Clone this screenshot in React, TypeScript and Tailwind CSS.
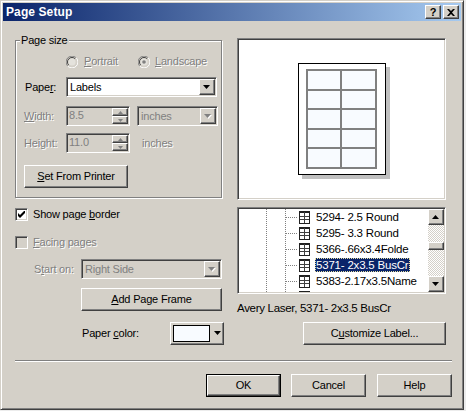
import React from "react";

const raised =
  "border border-t-white border-l-white border-r-[#404040] border-b-[#404040] shadow-[inset_-1px_-1px_#808080]";
const sunken =
  "border border-t-[#808080] border-l-[#808080] border-r-white border-b-white shadow-[inset_1px_1px_#404040,inset_-1px_-1px_#d4d0c8]";
const dis = "text-[#808080] [text-shadow:1px_1px_0_#fff]";

function DownArrow({ disabled }: { disabled?: boolean }) {
  return (
    <svg width="8" height="5" viewBox="0 0 8 5">
      {disabled && <polygon points="1,1 8,1 4.5,5" fill="#fff" />}
      <polygon points="0,0 7,0 3.5,4" fill={disabled ? "#808080" : "#000"} />
    </svg>
  );
}

function UpArrow({ disabled }: { disabled?: boolean }) {
  return (
    <svg width="8" height="5" viewBox="0 0 8 5">
      <polygon points="0,4 7,4 3.5,0" fill={disabled ? "#808080" : "#000"} />
    </svg>
  );
}

function DropBtn({ disabled }: { disabled?: boolean }) {
  return (
    <div className={`w-[16px] h-full bg-[#d4d0c8] flex items-center justify-center ${raised}`}>
      <DownArrow disabled={disabled} />
    </div>
  );
}

function Combo({
  text,
  width,
  disabled,
}: {
  text: string;
  width: string;
  disabled?: boolean;
}) {
  return (
    <div
      className={`${width} h-[20px] flex items-stretch ${sunken} ${
        disabled ? "bg-[#d4d0c8]" : "bg-white"
      } p-[1px]`}
    >
      <div
        className={`flex-1 pl-[2px] leading-[16px] ${
          disabled ? "text-[#808080]" : "text-black"
        }`}
      >
        {text}
      </div>
      <DropBtn disabled={disabled} />
    </div>
  );
}

function Spin({ text }: { text: string }) {
  return (
    <div className={`w-[64px] h-[20px] flex bg-[#d4d0c8] ${sunken} p-[1px]`}>
      <div className="flex-1 pl-[1px] leading-[14px] text-[#808080]">{text}</div>
      <div className="w-[16px] flex flex-col">
        <div className={`h-[8px] flex items-center justify-center ${raised}`}>
          <svg width="5" height="3" viewBox="0 0 5 3">
            <polygon points="0,3 5,3 2.5,0" fill="#808080" />
          </svg>
        </div>
        <div className={`h-[8px] flex items-center justify-center ${raised}`}>
          <svg width="5" height="3" viewBox="0 0 5 3">
            <polygon points="0,0 5,0 2.5,3" fill="#808080" />
          </svg>
        </div>
      </div>
    </div>
  );
}

function Radio({ checked }: { checked?: boolean }) {
  return (
    <svg width="12" height="12" viewBox="0 0 12 12">
      <path d="M10.2 1.8 A5.7 5.7 0 0 0 1.8 10.2" stroke="#808080" fill="none" />
      <path d="M1.8 10.2 A5.7 5.7 0 0 0 10.2 1.8" stroke="#fff" fill="none" />
      <path d="M9.2 2.8 A4.4 4.4 0 0 0 2.8 9.2" stroke="#404040" fill="none" />
      <path d="M2.8 9.2 A4.4 4.4 0 0 0 9.2 2.8" stroke="#d4d0c8" fill="none" />
      <circle cx="6" cy="6" r="3.6" fill="#e4e2dc" />
      {checked && <circle cx="6" cy="6" r="1.8" fill="#808080" />}
    </svg>
  );
}

function Check({ checked, disabled }: { checked?: boolean; disabled?: boolean }) {
  return (
    <div
      className={`w-[13px] h-[13px] ${sunken} ${
        disabled ? "bg-[#d4d0c8]" : "bg-white"
      } flex items-center justify-center`}
    >
      {checked && (
        <svg width="7" height="7" viewBox="0 0 7 7">
          <polygon points="0,2 2,4 6,0 7,0 7,2 2,7 0,5" fill="#000" />
        </svg>
      )}
    </div>
  );
}

function Btn({
  children,
  className,
}: {
  children: React.ReactNode;
  className: string;
}) {
  return (
    <div
      className={`${className} bg-[#d4d0c8] ${raised} flex items-center justify-center leading-[13px]`}
    >
      {children}
    </div>
  );
}

function PageIcon() {
  return (
    <svg width="11" height="13" viewBox="0 0 11 13">
      <rect x="0.5" y="0.5" width="10" height="12" fill="#fff" stroke="#202020" />
      <line x1="1" y1="1.5" x2="10" y2="1.5" stroke="#202020" />
      <line x1="5.5" y1="1" x2="5.5" y2="12" stroke="#404040" />
      <line x1="1" y1="5.5" x2="10" y2="5.5" stroke="#404040" />
      <line x1="1" y1="8.5" x2="10" y2="8.5" stroke="#404040" />
    </svg>
  );
}

const vdots =
  "w-px self-stretch bg-[repeating-linear-gradient(to_bottom,#808080_0_1px,transparent_1px_2px)]";
const hdots =
  "h-px bg-[repeating-linear-gradient(to_right,#808080_0_1px,transparent_1px_2px)]";

function TreeRow({ text, selected }: { text: string; selected?: boolean }) {
  return (
    <div className="h-[16px] flex items-center shrink-0">
      <div className="w-[27px]" />
      <div className={vdots} />
      <div className="w-[18px]" />
      <div className={vdots} />
      <div className={`w-[11px] ${hdots}`} />
      <div className="w-[2px]" />
      <PageIcon />
      <div className="w-[5px]" />
      <span
        className={`px-[1px] h-[14px] leading-[14px] whitespace-nowrap text-[11.5px] tracking-[-0.2px] ${
          selected
            ? "bg-[#0a246a] text-white outline-1 outline-dotted outline-[#e8e0a0] -outline-offset-1"
            : "text-black"
        }`}
      >
        {text}
      </span>
    </div>
  );
}

export default function App() {
  return (
    <div className="w-[466px] h-[411px] bg-[#ececec]">
      <div className="w-[464px] h-[410px] bg-[#d4d0c8] border border-t-[#d4d0c8] border-l-[#d4d0c8] border-r-[#404040] border-b-[#404040] shadow-[inset_1px_1px_#fff,inset_-1px_-1px_#808080] p-[2px] flex flex-col font-['Liberation_Sans',Arial,sans-serif] text-[11px] tracking-[-0.2px] text-black">
        {/* Title bar */}
        <div className="h-[18px] shrink-0 bg-[linear-gradient(to_right,#0a246a,#a6caf0)] flex items-center pl-[3px] pr-[2px]">
          <span className="flex-1 text-white font-bold text-[12px] tracking-[0.1px]">Page Setup</span>
          <div className={`w-[16px] h-[14px] bg-[#d4d0c8] ${raised} flex items-center justify-center font-bold text-[11px] leading-[11px]`}>
            ?
          </div>
          <div className={`ml-[2px] w-[16px] h-[14px] bg-[#d4d0c8] ${raised} flex items-center justify-center`}>
            <svg width="8" height="7" viewBox="0 0 8 7">
              <path d="M0 0 L2 0 L4 2 L6 0 L8 0 L5 3.5 L8 7 L6 7 L4 5 L2 7 L0 7 L3 3.5 Z" fill="#000" />
            </svg>
          </div>
        </div>

        {/* Body */}
        <div className="flex items-start">
          {/* Left column */}
          <div className="ml-[12px] w-[210px] flex flex-col">
            <div className="mt-[19px] relative w-[207px] h-[158px] border border-[#808080] shadow-[inset_1px_1px_#fff,1px_1px_#fff] flex flex-col">
              <span className="absolute -top-[7px] left-[4px] bg-[#d4d0c8] px-[1px] leading-[13px]">
                Page size
              </span>
              <div className="mt-[14px] h-[13px] flex items-center pl-[50px]">
                <div className="w-[72px] flex items-center">
                  <Radio />
                  <span className={`ml-[6px] ${dis}`}>
                    <u>P</u>ortrait
                  </span>
                </div>
                <div className="flex items-center">
                  <Radio checked />
                  <span className={`ml-[5px] ${dis}`}>
                    <u>L</u>andscape
                  </span>
                </div>
              </div>
              <div className="mt-[9px] h-[20px] flex items-center pl-[9px]">
                <span className="w-[41px]">
                  Pape<u>r</u>:
                </span>
                <Combo text="Labels" width="w-[151px]" />
              </div>
              <div className="mt-[9px] h-[20px] flex items-center pl-[8px]">
                <span className={`w-[42px] ${dis}`}>
                  <u>W</u>idth:
                </span>
                <Spin text="8.5" />
                <div className="ml-[7px]">
                  <Combo text="inches" width="w-[81px]" disabled />
                </div>
              </div>
              <div className="mt-[7px] h-[20px] flex items-center pl-[8px]">
                <span className={`w-[42px] ${dis}`}>
                  Hei<u>g</u>ht:
                </span>
                <Spin text="11.0" />
                <span className={`ml-[12px] ${dis}`}>inches</span>
              </div>
              <div className="mt-[12px] pl-[8px]">
                <Btn className="w-[104px] h-[23px]">
                  <span>
                    <u>S</u>et From Printer
                  </span>
                </Btn>
              </div>
            </div>

            <div className="mt-[10px] h-[13px] flex items-center">
              <Check checked />
              <span className="ml-[5px]">
                Show page <u>b</u>order
              </span>
            </div>
            <div className="mt-[15px] h-[13px] flex items-center">
              <Check disabled />
              <span className={`ml-[5px] ${dis}`}>
                <u>F</u>acing pages
              </span>
            </div>
            <div className="mt-[10px] h-[20px] flex items-center pl-[19px]">
              <span className={`w-[47px] ${dis}`}>
                S<u>t</u>art on:
              </span>
              <Combo text="Right Side" width="w-[141px]" disabled />
            </div>
            <div className="mt-[9px] pl-[66px]">
              <Btn className="w-[141px] h-[23px]">
                <span>
                  <u>A</u>dd Page Frame
                </span>
              </Btn>
            </div>
            <div className="mt-[11px] h-[23px] flex items-center pl-[67px]">
              <span className="w-[88px]">
                Paper <u>c</u>olor:
              </span>
              <div className={`w-[54px] h-[23px] bg-[#d4d0c8] ${raised} flex items-center pl-[2px]`}>
                <div className="w-[37px] h-[17px] border border-black bg-[#f8fbff]" />
                <div className="ml-[4px]">
                  <DownArrow />
                </div>
              </div>
            </div>
          </div>

          {/* Right column */}
          <div className="ml-[12px] w-[209px] flex flex-col">
            <div className={`mt-[17px] h-[162px] bg-white ${sunken} flex items-center justify-center`}>
              <div className="w-[88px] h-[112px] border border-black bg-white shadow-[4px_4px_0_#c0c0c0] pt-[5px] pl-[7px]">
                <div className="w-[71px] h-[100px] bg-[#808080] p-[2px] grid grid-cols-2 grid-rows-5 gap-[2px]">
                  {Array.from({ length: 10 }).map((_, i) => (
                    <div key={i} className="bg-[#f8fbff]" />
                  ))}
                </div>
              </div>
            </div>

            <div className={`mt-[7px] h-[87px] bg-white ${sunken} p-[1px] flex`}>
              <div className="flex-1 flex flex-col overflow-hidden">
                <TreeRow text="5294- 2.5 Round" />
                <TreeRow text="5295- 3.3 Round" />
                <TreeRow text="5366-.66x3.4Folde" />
                <TreeRow text="5371- 2x3.5 BusCr" selected />
                <TreeRow text="5383-2.17x3.5Name" />
                <div className="h-[3px] overflow-hidden shrink-0">
                  <TreeRow text="5384-3x4Name Tag" />
                </div>
              </div>
              <div className="w-[16px] flex flex-col">
                <div className={`h-[16px] bg-[#d4d0c8] ${raised} flex items-center justify-center`}>
                  <UpArrow />
                </div>
                <div className="flex-1 bg-[conic-gradient(#d4d0c8_25%,#fff_0_50%,#d4d0c8_0_75%,#fff_0)] bg-[length:2px_2px]">
                  <div className={`mt-[17px] h-[8px] bg-[#d4d0c8] ${raised}`} />
                </div>
                <div className={`h-[16px] bg-[#d4d0c8] ${raised} flex items-center justify-center`}>
                  <DownArrow />
                </div>
              </div>
            </div>

            <div className="mt-[8px] h-[13px] leading-[13px] text-[11.5px] tracking-[-0.3px] whitespace-nowrap">
              Avery Laser, 5371- 2x3.5 BusCr
            </div>

            <div className="mt-[7px] pl-[66px]">
              <Btn className="w-[143px] h-[23px]">
                <span>
                  C<u>u</u>stomize Label...
                </span>
              </Btn>
            </div>
          </div>
        </div>

        {/* Separator */}
        <div className="mt-[15px] ml-[12px] w-[437px] h-[2px] border-t border-t-[#808080] border-b border-b-white" />

        {/* Buttons */}
        <div className="mt-[12px] flex justify-end pr-[9px]">
          <div className="w-[75px] h-[23px] border border-black">
            <Btn className="w-full h-full">OK</Btn>
          </div>
          <Btn className="ml-[10px] w-[75px] h-[23px]">Cancel</Btn>
          <Btn className="ml-[11px] w-[75px] h-[23px]">Help</Btn>
        </div>
      </div>
    </div>
  );
}
